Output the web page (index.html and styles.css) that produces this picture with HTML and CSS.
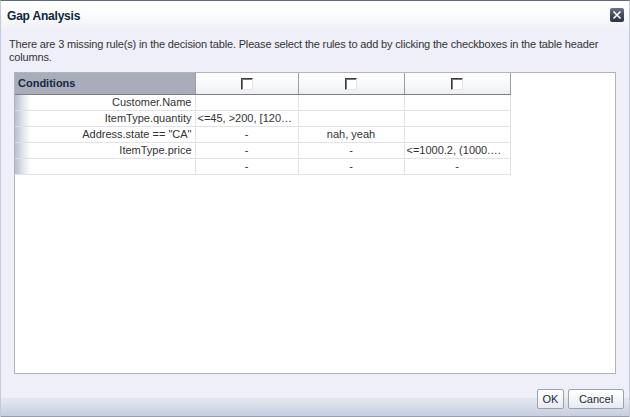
FILE: index.html
```html
<!DOCTYPE html>
<html>
<head>
<meta charset="utf-8">
<link rel="stylesheet" href="styles.css">
</head>
<body>
<div class="dialog">
  <div class="titlebar">
    <span class="title">Gap Analysis</span>
    <span class="close"><svg width="10" height="10" viewBox="0 0 10 10"><path d="M1.5 1.5 L8.5 8.5 M8.5 1.5 L1.5 8.5" stroke="#fff" stroke-width="1.6" fill="none"/></svg></span>
  </div>
  <div class="content">
    <p class="desc">There are 3 missing rule(s) in the decision table. Please select the rules to add by clicking the checkboxes in the table header columns.</p>
    <div class="panel">
      <table class="grid">
        <colgroup><col class="c0"><col class="c1"><col class="c2"><col class="c3"></colgroup>
        <thead>
          <tr>
            <th class="cond">Conditions</th>
            <th class="rule"><span class="check"></span></th>
            <th class="rule"><span class="check"></span></th>
            <th class="rule"><span class="check"></span></th>
          </tr>
        </thead>
        <tbody>
          <tr><td class="rh">Customer.Name</td><td></td><td></td><td></td></tr>
          <tr><td class="rh">ItemType.quantity</td><td class="left">&lt;=45, &gt;200, [120…</td><td></td><td></td></tr>
          <tr><td class="rh">Address.state == "CA"</td><td>-</td><td>nah, yeah</td><td></td></tr>
          <tr><td class="rh">ItemType.price</td><td>-</td><td>-</td><td class="left">&lt;=1000.2, (1000.…</td></tr>
          <tr><td class="rh"></td><td>-</td><td>-</td><td>-</td></tr>
        </tbody>
      </table>
    </div>
  </div>
  <div class="footer">
    <button class="btn ok">OK</button>
    <button class="btn cancel">Cancel</button>
  </div>
</div>
</body>
</html>
```
FILE: styles.css
```css
* { box-sizing: border-box; }
html, body { margin: 0; padding: 0; }
body {
  font-family: "Liberation Sans", Arial, sans-serif;
  font-size: 11px;
  color: #333;
  background: #eeeff8;
}
.dialog {
  width: 630px;
  height: 417px;
  display: flex;
  flex-direction: column;
  border-top: 1px solid #5c6a7e;
  border-left: 1px solid #c6c8d6;
  border-right: 1px solid #c6c8d6;
  background: #eeeff8;
}
.titlebar {
  height: 27px;
  flex: none;
  display: flex;
  align-items: center;
  justify-content: space-between;
  padding: 0 5px 0 6px;
  background: linear-gradient(to bottom, #ffffff 0, #fbfcfd 50%, #f0f2f6 100%);
}
.title {
  font-weight: bold;
  font-size: 12px;
  color: #0f2440;
  padding-top: 2px;
  letter-spacing: -0.2px;
}
.close {
  width: 14px;
  height: 14px;
  border-radius: 2px;
  background: linear-gradient(to bottom, #6c7484 0, #444c5c 50%, #2e3444 100%);
  display: flex;
  align-items: center;
  justify-content: center;
  margin-top: 1px;
}
.content {
  flex: 1;
  padding: 10px 13px 0 13px;
  display: flex;
  flex-direction: column;
}
.desc {
  margin: 0 -2px 0 -5px;
  line-height: 13px;
  color: #333;
  height: 34px;
  letter-spacing: -0.16px;
}
.panel {
  height: 302px;
  background: #fff;
  border: 1px solid #b4b4b8;
}
.grid {
  border-collapse: collapse;
  table-layout: fixed;
  width: 495px;
}
.c0 { width: 180px; }
.c1 { width: 103px; }
.c2 { width: 106px; }
.c3 { width: 106px; }
.grid th {
  height: 21px;
  padding: 0;
  border-bottom: 1px solid #7e7e84;
  border-right: 1px solid #9c9ca4;
}
.grid th.cond {
  background: #a9adbb;
  text-align: left;
  padding-left: 3px;
  font-weight: bold;
  font-size: 11px;
  color: #1a2840;
}
.grid th.rule {
  background: linear-gradient(to bottom, #ffffff 0, #f6f7f9 60%, #eceef2 100%);
  vertical-align: middle;
}
.check {
  display: inline-block;
  width: 12px;
  height: 12px;
  background: #fff;
  border: 1px solid;
  border-color: #3a3a3a #e4e4e4 #e4e4e4 #3a3a3a;
  box-shadow: inset 1px 1px 0 #7a7a7a;
  vertical-align: middle;
  margin-top: -1px;
}
.grid td {
  height: 16px;
  padding: 0 2px;
  border-bottom: 1px solid #e2e2e6;
  border-right: 1px solid #e2e2e6;
  text-align: center;
  white-space: nowrap;
  overflow: hidden;
  color: #333;
  line-height: 14px;
}
.grid td.left { text-align: left; }
.grid td.rh {
  text-align: right;
  padding-right: 3px;
  background: linear-gradient(to right, #b6bfcc 0, #c4ccd6 3px, #dce2e8 7px, #f4f6f8 13px, #ffffff 17px);
  border-right-color: #e2e2e6;
}
.footer {
  height: 43px;
  flex: none;
  display: flex;
  justify-content: flex-end;
  align-items: flex-start;
  gap: 4px;
  padding: 15px 5px 0 0;
  background: linear-gradient(to bottom, #eeeff8 0, #eeeff8 24px, #e4e5ea 24px, #e2e4ea 28px, #dbe3ee 29px, #d6dde9 33px, #cdd4e4 37px, #c8cfe0 42px, #9a9eaa 42px);
}
.btn {
  font-family: "Liberation Sans", Arial, sans-serif;
  font-size: 11px;
  color: #1a2a44;
  height: 20px;
  padding: 0;
  border: 1px solid #9aa2b2;
  border-radius: 2px;
  background: linear-gradient(to bottom, #ffffff 0, #f4f6f9 50%, #e6e9ef 100%);
}
.ok { width: 27px; }
.cancel { width: 56px; }
```
